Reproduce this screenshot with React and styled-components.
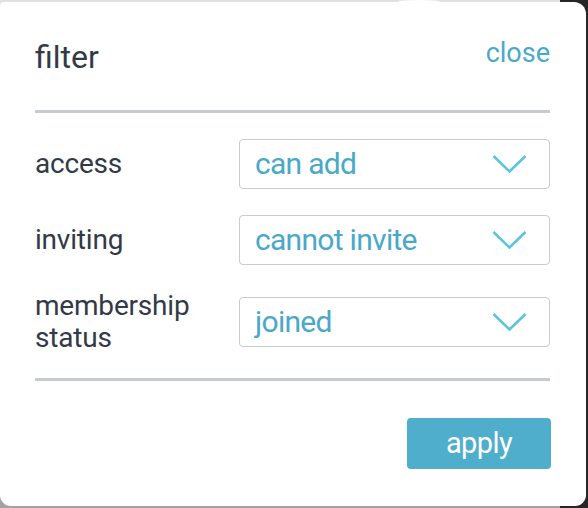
import styled, { createGlobalStyle } from "styled-components";

const GlobalStyle = createGlobalStyle`
  html, body {
    margin: 0;
    padding: 0;
  }
  body {
    width: 588px;
    height: 508px;
    overflow: hidden;
    font-family: Roboto, "Noto Sans", sans-serif;
    background:
      linear-gradient(to right, transparent 560px, #262626 560px),
      linear-gradient(to bottom, #e1e1e1 50%, #a3a3a3 50%);
  }
`;

const Popup = styled.div`
  position: relative;
  box-sizing: border-box;
  width: 586px;
  height: 504px;
  margin-top: 2px;
  padding: 36px 36px 0 35px;
  background: #fff;
  border-radius: 4px 12px 11px 11px;
  display: flex;
  flex-direction: column;

  &::before {
    content: "";
    position: absolute;
    top: -2px;
    left: 398px;
    width: 42px;
    height: 4px;
    background: #fff;
    border-radius: 50% 50% 0 0;
  }
`;

const Header = styled.div`
  display: flex;
  justify-content: space-between;
  align-items: flex-start;
`;

const Title = styled.h1`
  margin: 0;
  font-size: 32px;
  line-height: 38px;
  font-weight: 400;
  color: #333a47;
`;

const Close = styled.a`
  margin-top: -1px;
  font-size: 27px;
  line-height: 32px;
  color: #4ba9c8;
  cursor: pointer;
`;

const Divider = styled.div`
  height: 3px;
  background: #c3cdd1;
  margin-top: ${(p) => p.$top}px;
`;

const Rows = styled.div`
  display: flex;
  flex-direction: column;
  margin-top: 26px;
`;

const Row = styled.div`
  display: flex;
  align-items: center;
  margin-top: ${(p) => p.$gap || 0}px;
`;

const Label = styled.div`
  width: 204px;
  font-size: 28px;
  line-height: 32px;
  letter-spacing: -0.2px;
  color: #333a47;
`;

const Select = styled.div`
  box-sizing: border-box;
  flex: 1;
  height: 50px;
  border: 1px solid #c5cdd1;
  border-radius: 4px;
  padding: 0 22px 0 15px;
  display: flex;
  align-items: center;
  justify-content: space-between;
`;

const Value = styled.span`
  font-size: 30px;
  line-height: 48px;
  letter-spacing: -0.7px;
  color: #4aa8c9;
`;

const Footer = styled.div`
  display: flex;
  justify-content: flex-end;
  margin-top: 37px;
`;

const Apply = styled.button`
  width: 144px;
  height: 51px;
  margin-right: -1px;
  border: none;
  border-radius: 4px;
  background: #50aecd;
  color: #fff;
  font-family: Roboto, "Noto Sans", sans-serif;
  font-size: 29px;
  line-height: 51px;
  letter-spacing: -0.6px;
  padding: 0;
  cursor: pointer;
`;

function Chevron() {
  return (
    <svg width="35" height="20" viewBox="0 0 35 20">
      <polyline
        points="1.5,2 17.5,17.5 33.5,2"
        fill="none"
        stroke="#5bc4df"
        strokeWidth="2.6"
      />
    </svg>
  );
}

const filters = [
  { label: "access", value: "can add", gap: 0 },
  { label: "inviting", value: "cannot invite", gap: 26 },
  { label: ["membership", "status"], value: "joined", gap: 25 },
];

export default function App() {
  return (
    <>
      <GlobalStyle />
      <Popup>
        <Header>
          <Title>filter</Title>
          <Close>close</Close>
        </Header>
        <Divider $top={34} />
        <Rows>
          {filters.map((f) => (
            <Row key={f.value} $gap={f.gap}>
              <Label>
                {Array.isArray(f.label) ? (
                  <>
                    {f.label[0]}
                    <br />
                    {f.label[1]}
                  </>
                ) : (
                  f.label
                )}
              </Label>
              <Select>
                <Value>{f.value}</Value>
                <Chevron />
              </Select>
            </Row>
          ))}
        </Rows>
        <Divider $top={24} />
        <Footer>
          <Apply>apply</Apply>
        </Footer>
      </Popup>
    </>
  );
}
